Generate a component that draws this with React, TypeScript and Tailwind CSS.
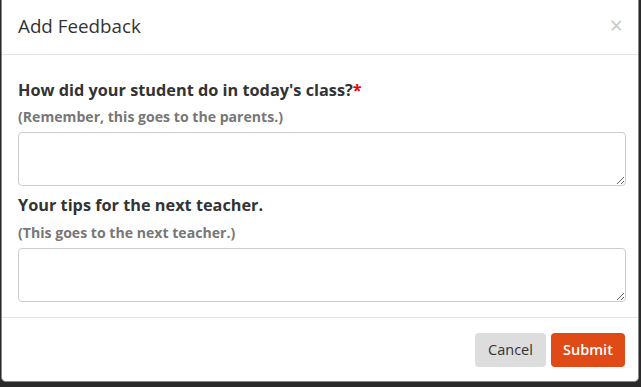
import React from 'react';

const App = () => {
  return (
    <div className="w-[641px] h-[387px] bg-[#2a2a2a] overflow-hidden" style={{ fontFamily: '"Open Sans", "Noto Sans", sans-serif' }}>
      <div className="ml-px w-[638px] h-[382px] bg-white border-l border-r border-b border-[#8a8a8a] rounded-b-[5px] flex flex-col">
        <div className="h-[55px] shrink-0 px-[16px] flex items-center justify-between border-b border-[#e5e5e5]">
          <h4 className="text-[18.8px] text-[#333] leading-none -mt-[2px]">Add Feedback</h4>
          <button className="text-[#c8c8c8] text-[23px] leading-none mr-[-1px] -mt-[3px]">×</button>
        </div>

        <div className="px-[16px] pt-[25px] h-[263px] shrink-0 border-b border-[#e5e5e5]">
          <label className="block text-[16.3px] font-bold text-[#333] leading-[21px]">
            How did your student do in today's class?<span className="text-[#e00]">*</span>
          </label>
          <p className="mt-[6px] text-[14.1px] font-bold text-[#777] leading-[19px]">(Remember, this goes to the parents.)</p>
          <textarea className="mt-[6px] block w-[608px] h-[54px] border border-[#ccc] rounded-[4px] resize-y" />

          <label className="mt-[9px] block text-[16.3px] font-bold text-[#333] leading-[21px]">
            Your tips for the next teacher.
          </label>
          <p className="mt-[7px] text-[14.1px] font-bold text-[#777] leading-[19px]">(This goes to the next teacher.)</p>
          <textarea className="mt-[6px] block w-[608px] h-[54px] border border-[#ccc] rounded-[4px] resize-y" />
        </div>

        <div className="flex justify-end gap-[5px] px-[13px] pt-[15px]">
          <button className="w-[71px] h-[34px] rounded-[4px] bg-[#dddddd] text-[#333] text-[14.5px]">Cancel</button>
          <button className="w-[74px] h-[34px] rounded-[4px] bg-[#e04a16] text-white text-[14.5px] font-semibold">Submit</button>
        </div>
      </div>
    </div>
  );
};

export default App;
